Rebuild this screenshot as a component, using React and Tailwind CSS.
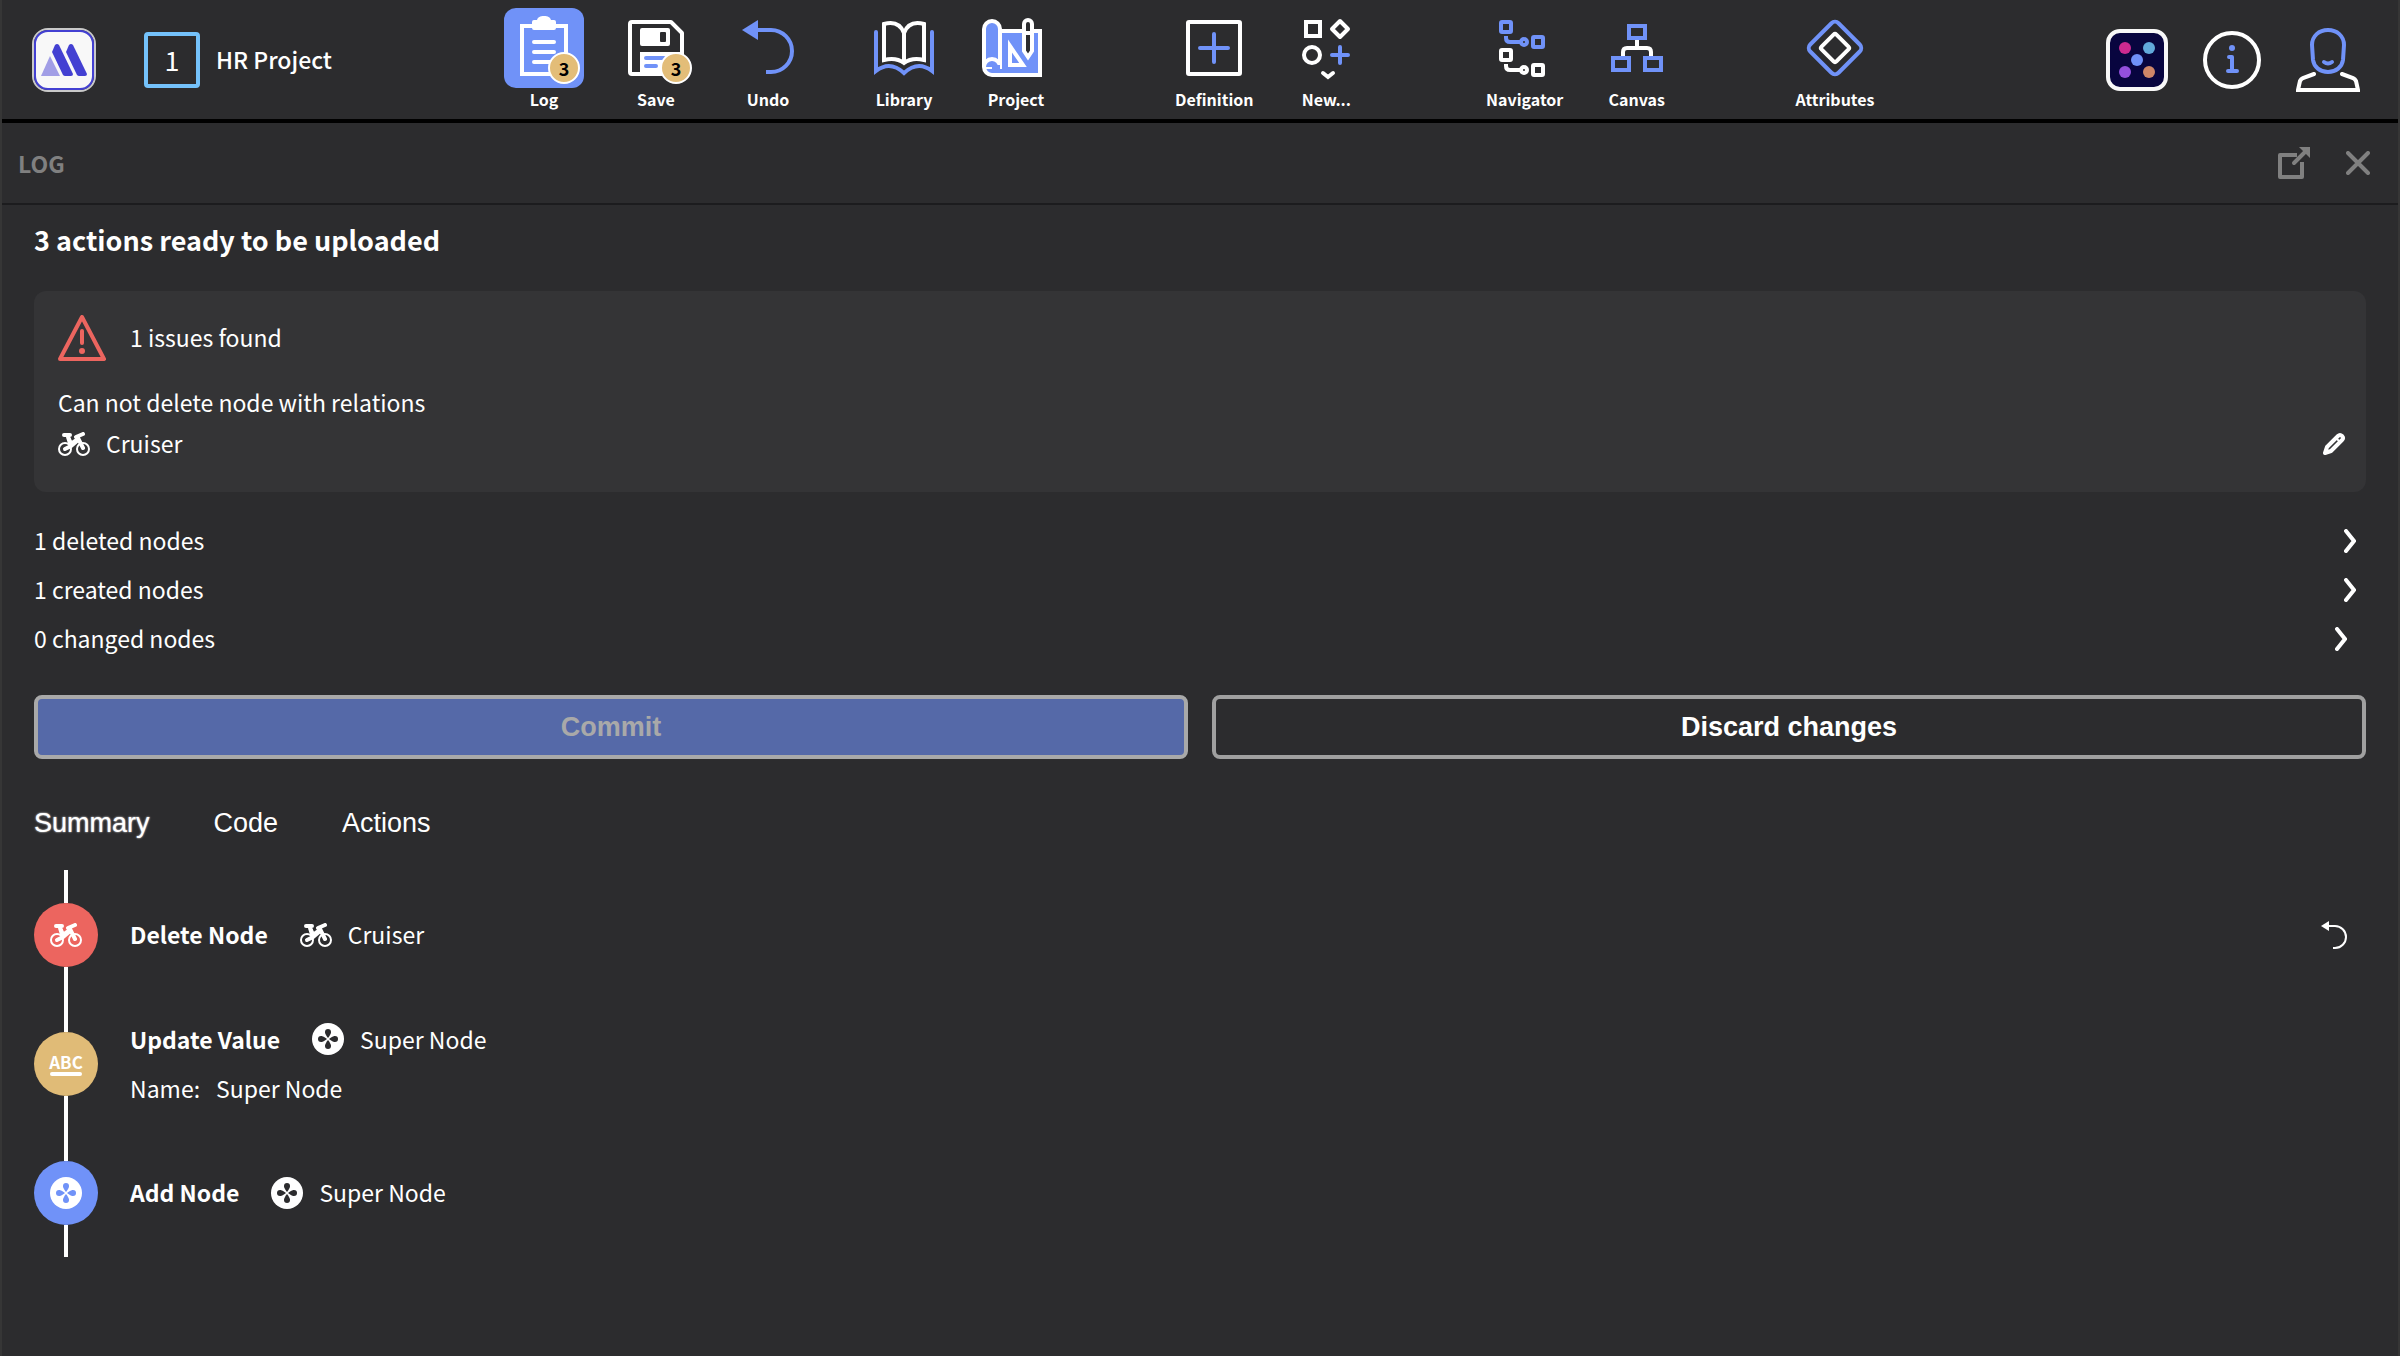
import { useState } from "react";

const LogIcon = () => (
  <svg viewBox="0 0 80 80" className="size-20" fill="none" stroke="#fff" strokeWidth="4">
    <path d="M18 18H62V66H18Z" />
    <path
      d="M30 12h3c1-3 3-4 7-4s6 1 7 4h3a2 2 0 0 1 2 2v6a2 2 0 0 1-2 2H30a2 2 0 0 1-2-2v-6a2 2 0 0 1 2-2Z"
      fill="#fff"
      stroke="none"
    />
    <path d="M30 34H50M30 44H50M30 54H50" strokeLinecap="round" />
  </svg>
);

const SaveIcon = () => (
  <svg viewBox="0 0 80 80" className="size-20" fill="none" stroke="#fff" strokeWidth="4">
    <path d="M16 14H55L66 25V66H16a2 2 0 0 1-2-2V16a2 2 0 0 1 2-2Z" strokeLinejoin="round" />
    <path
      d="M26 20H52a2 2 0 0 1 2 2V36a2 2 0 0 1-2 2H26a2 2 0 0 1-2-2V22a2 2 0 0 1 2-2Z"
      fill="#fff"
      stroke="none"
    />
    <rect x="44" y="24" width="6" height="10" rx="1" fill="#2c2c2e" stroke="none" />
    <path d="M24 44H66V66H24Z" fill="#fff" stroke="none" />
    <path d="M30 50H48M30 58H40" stroke="#7092f8" strokeLinecap="round" />
  </svg>
);

const UndoIcon = () => (
  <svg viewBox="0 0 80 80" className="size-20" fill="none" stroke="#7092f8" strokeWidth="4">
    <path d="M28 22H43A21 21 0 0 1 43 64H38" />
    <path d="M14 22L30 12V32Z" fill="#7092f8" stroke="none" />
  </svg>
);

const LibraryIcon = () => (
  <svg viewBox="0 0 80 80" className="size-20" fill="none" stroke="#fff" strokeWidth="4">
    <path d="M12 24V63Q26 52 40 65Q54 52 68 63V24" stroke="#7092f8" strokeLinecap="round" />
    <path d="M40 25Q35 12 20 16V52Q32 49 40 55Q48 49 60 52V16Q45 12 40 25V55" />
  </svg>
);

const ProjectIcon = () => (
  <svg viewBox="0 0 80 80" className="size-20" fill="#7092f8" stroke="#fff" strokeWidth="4">
    <path d="M24 23H64V67H16A8 8 0 0 1 8 59H24Z" />
    <path d="M8 59V21a8 8 0 0 1 16 0V59" />
    <path d="M8 59A8 8 0 0 1 24 59" />
    <path d="M16 57h8v8h-8z" stroke="none" />
    <path d="M34 38V57H47Z" />
    <path d="M48 16a4 4 0 0 1 8 0V43L52 49L48 43Z" fill="#2c2c2e" />
    <path d="M48 25H56" />
  </svg>
);

const DefinitionIcon = () => (
  <svg viewBox="0 0 80 80" className="size-20" fill="none" stroke="#fff" strokeWidth="4">
    <rect x="14" y="14" width="52" height="52" rx="1" />
    <path d="M40 26V54M26 40H54" stroke="#7092f8" strokeLinecap="round" />
  </svg>
);

const NewIcon = () => (
  <svg viewBox="0 0 80 80" className="size-20" fill="none" stroke="#fff" strokeWidth="4">
    <rect x="20" y="14" width="14" height="14" />
    <path d="M54 13L62 21L54 29L46 21Z" strokeLinejoin="round" />
    <circle cx="26" cy="47" r="8" />
    <path d="M54 39V55M46 47H62" stroke="#7092f8" strokeLinecap="round" />
    <path d="M37 65L42 69L47 65" strokeLinecap="round" />
  </svg>
);

const NavigatorIcon = () => (
  <svg viewBox="0 0 80 80" className="size-20" fill="none" strokeWidth="4">
    <g stroke="#7092f8">
      <rect x="16" y="14" width="10" height="10" rx="1" />
      <path d="M21 28v2q0 4 4 4H35" />
      <circle cx="39" cy="34" r="3" />
      <rect x="48" y="29" width="10" height="10" rx="1" />
    </g>
    <g stroke="#fff">
      <rect x="16" y="42" width="10" height="10" rx="1" />
      <path d="M21 56v2q0 4 4 4H35" />
      <circle cx="39" cy="62" r="3" />
      <rect x="48" y="57" width="10" height="10" rx="1" />
    </g>
  </svg>
);

const CanvasIcon = () => (
  <svg viewBox="0 0 80 80" className="size-20" fill="none" stroke="#7092f8" strokeWidth="4">
    <path d="M40 32V40M26 48V44q0-4 4-4H50q4 0 4 4V48" stroke="#fff" />
    <rect x="32" y="18" width="16" height="12" />
    <rect x="16" y="50" width="16" height="12" />
    <rect x="48" y="50" width="16" height="12" />
  </svg>
);

const AttributesIcon = () => (
  <svg viewBox="0 0 80 80" className="size-20" fill="none" strokeWidth="4">
    <rect x="20" y="20" width="40" height="40" rx="5" transform="rotate(45 40 40)" stroke="#7092f8" />
    <rect x="29.5" y="29.5" width="21" height="21" rx="2" transform="rotate(45 40 40)" stroke="#fff" />
  </svg>
);

const BikeIcon = () => (
  <svg viewBox="0 0 32 24" className="w-8 h-6" fill="none" stroke="#fff" strokeLinecap="round">
    <circle cx="7" cy="17" r="6" strokeWidth="2" />
    <circle cx="25" cy="17" r="6" strokeWidth="2" />
    <path d="M6 3H12M10 5L12 11M7 17L13 14L19 9" strokeWidth="4" />
    <path d="M11 7L13 12L20 7" strokeWidth="4" strokeLinejoin="round" />
    <path d="M18 5L25 2M20 6L25 16" strokeWidth="4" />
  </svg>
);

// Petals take the colour behind the disc
const SuperNodeIcon = ({ petal = "#2c2c2e" }) => (
  <svg viewBox="0 0 32 32" className="size-8" fill={petal}>
    <circle cx="16" cy="16" r="16" fill="#fff" />
    <path d="M16 15C13 11 13 10 13 9a3 3 0 0 1 6 0c0 1 0 2-3 6Z" />
    <path d="M16 17C13 21 13 22 13 23a3 3 0 0 0 6 0c0-1 0-2-3-6Z" />
    <path d="M15 16C11 13 10 13 9 13a3 3 0 0 0 0 6c1 0 2 0 6-3Z" />
    <path d="M17 16C21 13 22 13 23 13a3 3 0 0 1 0 6c-1 0-2 0-6-3Z" />
  </svg>
);

const TextValueIcon = () => (
  <span className="flex flex-col items-center">
    <span className="text-[17px] leading-5 font-bold">ABC</span>
    <span className="h-1 w-8 rounded-full bg-white" />
  </span>
);

const LogoIcon = () => (
  <svg viewBox="0 0 64 64" className="size-16">
    <rect x="1" y="1" width="62" height="62" rx="15" fill="#2c2c2e" stroke="#c9c9c9" strokeWidth="2" />
    <rect x="3" y="3" width="58" height="58" rx="13" fill="#f8f8f8" stroke="#4340d2" strokeWidth="2" />
    <path d="M18 28L28 48H9Z" fill="#a19ee6" />
    <path d="M20 24L23 17Q25 15 27 17L41 46Q41 48 39 48H33Q32 48 31 47Z" fill="#4340d2" />
    <path d="M34 24L37 17Q39 15 41 17L55 46Q55 48 53 48H47Q46 48 45 47Z" fill="#4340d2" />
  </svg>
);

const DiceIcon = () => (
  <svg viewBox="0 0 62 62" className="size-[62px]">
    <rect x="2" y="2" width="58" height="58" rx="12" fill="#08053f" stroke="#f8f8f8" strokeWidth="4" />
    <circle cx="19" cy="19" r="6" fill="#cc2a90" />
    <circle cx="43" cy="19" r="6" fill="#62a9dc" />
    <circle cx="31" cy="31" r="6" fill="#6f91f8" />
    <circle cx="19" cy="43" r="6" fill="#9350dc" />
    <circle cx="43" cy="43" r="6" fill="#cf8668" />
  </svg>
);

const InfoIcon = () => (
  <svg viewBox="0 0 58 58" className="size-[58px]" fill="none" stroke="#7092f8" strokeWidth="4">
    <circle cx="29" cy="29" r="27" stroke="#fff" />
    <circle cx="29" cy="17" r="3" fill="#7092f8" stroke="none" />
    <path d="M26 26H29V40M25 40H34" strokeLinecap="round" strokeLinejoin="round" />
  </svg>
);

const UserIcon = () => (
  <svg viewBox="0 0 64 64" className="size-16" fill="none" stroke="#7092f8" strokeWidth="4" strokeLinecap="round">
    <path d="M16 17C16 8 23 2 32 2S48 8 48 17L47 32C46 39 40 44 32 44S18 39 17 32Z" />
    <path d="M28 34Q32 37 36 34" />
    <path d="M18 46L7 50Q5 51 4 53L2 62H62L60 53Q59 51 57 50L46 46" stroke="#fff" />
  </svg>
);

const OpenIcon = () => (
  <svg viewBox="0 0 32 32" className="size-8" fill="none" stroke="#808080" strokeWidth="4">
    <path d="M19 8H2V30H24V15" strokeLinejoin="round" />
    <path d="M16 16L27 5" strokeLinecap="round" />
    <path d="M21 0H32V11Z" fill="#808080" stroke="none" />
  </svg>
);

const CloseIcon = () => (
  <svg viewBox="0 0 24 24" className="size-6" stroke="#808080" strokeWidth="4" strokeLinecap="round">
    <path d="M2 2L22 22M22 2L2 22" />
  </svg>
);

const WarningIcon = () => (
  <svg viewBox="0 0 48 46" className="w-12 h-[46px]" fill="none" stroke="#ec655f" strokeWidth="4">
    <path d="M24 2L46 44H2Z" strokeLinejoin="round" />
    <path d="M24 16V28" strokeLinecap="round" />
    <circle cx="24" cy="36" r="3" fill="#ec655f" stroke="none" />
  </svg>
);

const PencilIcon = () => (
  <svg viewBox="0 0 24 24" className="size-6" fill="none" stroke="#fff" strokeWidth="4" strokeLinejoin="round">
    <path d="M3 21L5 15L16 4Q18 2 20 4Q22 6 20 8L9 19Z" />
    <path d="M14 6L18 10" strokeWidth="2" />
  </svg>
);

const ChevronIcon = () => (
  <svg viewBox="0 0 12 24" className="w-3 h-6" fill="none" stroke="#fff" strokeWidth="4">
    <path d="M2 2L10 12L2 22" strokeLinecap="round" />
  </svg>
);

const RevertIcon = () => (
  <svg viewBox="0 0 26 28" className="w-[26px] h-7" fill="none" stroke="#fff" strokeWidth="2">
    <path d="M7 5H14A11 11 0 0 1 14 27H12" />
    <path d="M0 5L8 0V10Z" fill="#fff" stroke="none" />
  </svg>
);

const toolGroups = [
  [
    [
      { label: "Log", icon: LogIcon, badge: 3, active: true },
      { label: "Save", icon: SaveIcon, badge: 3 },
      { label: "Undo", icon: UndoIcon },
    ],
    [
      { label: "Library", icon: LibraryIcon },
      { label: "Project", icon: ProjectIcon },
    ],
  ],
  [
    [
      { label: "Definition", icon: DefinitionIcon },
      { label: "New...", icon: NewIcon },
    ],
  ],
  [
    [
      { label: "Navigator", icon: NavigatorIcon },
      { label: "Canvas", icon: CanvasIcon },
    ],
  ],
  [[{ label: "Attributes", icon: AttributesIcon }]],
];

const nodeCounts = [
  { label: "1 deleted nodes", pad: "pr-[10px]" },
  { label: "1 created nodes", pad: "pr-[10px]" },
  { label: "0 changed nodes", pad: "pr-[19px]" },
];

const tabs = ["Summary", "Code", "Actions"];

const ToolButton = ({ label, icon: Icon, badge, active }) => (
  <button className="flex w-28 flex-col items-center">
    <span className={`relative size-20 rounded-xl ${active ? "bg-[#7092f8]" : ""}`}>
      <Icon />
      {badge && (
        <span className="absolute bottom-1 right-1 flex size-8 items-center justify-center rounded-full border-2 border-white bg-[#e3bd78] text-lg leading-none font-bold text-black">
          {badge}
        </span>
      )}
    </span>
    <span className="text-base leading-[22px] font-bold">{label}</span>
  </button>
);

const TimelineRow = ({ color, icon, title, target, targetIcon, detail, onRevert }) => (
  <li className="flex min-h-[129px] gap-8">
    <div className="flex w-16 shrink-0 flex-col items-center">
      <span className="w-1 flex-1 bg-white" />
      <span className={`flex size-16 items-center justify-center rounded-full ${color}`}>{icon}</span>
      <span className="w-1 flex-1 bg-white" />
    </div>
    <div className="flex flex-1 flex-col justify-center">
      <div className="flex items-center gap-8">
        <strong className="font-bold">{title}</strong>
        <span className="flex items-center gap-4">
          {targetIcon}
          {target}
        </span>
      </div>
      {detail && (
        <div className="flex gap-4">
          <span>{detail.name}:</span>
          <span>{detail.value}</span>
        </div>
      )}
    </div>
    {onRevert && (
      <button aria-label="Revert action" onClick={onRevert} className="pr-[19px]">
        <RevertIcon />
      </button>
    )}
  </li>
);

const App = () => {
  const [activeTab, setActiveTab] = useState("Summary");

  return (
    <div className="flex min-h-screen flex-col border-x-2 border-[#363636] bg-[#2c2c2e] font-['Noto_Sans_CJK_SC','Open_Sans',sans-serif] text-[23px] leading-[49px] text-white">
      {/* Toolbar */}
      <header className="flex border-b-4 border-black">
        <div className="flex w-[486px] shrink-0 items-center pl-[30px]">
          <a href="#home" aria-label="Home">
            <LogoIcon />
          </a>
          <span className="ml-12 flex size-14 items-center justify-center rounded border-4 border-[#74c2fb] text-[27px]">
            1
          </span>
          <h1 className="ml-4 font-medium">HR Project</h1>
        </div>
        <nav className="flex flex-1 justify-between pt-2 pb-[9px]">
          {toolGroups.map((group, i) => (
            <div key={i} className="flex gap-6">
              {group.map((tools, j) => (
                <div key={j} className="flex">
                  {tools.map((tool) => (
                    <ToolButton key={tool.label} {...tool} />
                  ))}
                </div>
              ))}
            </div>
          ))}
        </nav>
        <div className="flex w-[507px] shrink-0 items-center justify-end gap-[35px] pr-[38px]">
          <button aria-label="Apps">
            <DiceIcon />
          </button>
          <button aria-label="Info">
            <InfoIcon />
          </button>
          <button aria-label="Account">
            <UserIcon />
          </button>
        </div>
      </header>

      {/* Panel title */}
      <div className="flex h-[82px] items-center justify-between border-b-2 border-[#1c1c1e] pr-7 pl-4">
        <h2 className="font-bold text-[#808080]">LOG</h2>
        <div className="flex items-center gap-9">
          <button aria-label="Open in window">
            <OpenIcon />
          </button>
          <button aria-label="Close">
            <CloseIcon />
          </button>
        </div>
      </div>

      <main className="px-8 pt-[10px]">
        <h3 className="text-[27px] font-bold">3 actions ready to be uploaded</h3>

        {/* Issues */}
        <section className="mt-[27px] rounded-xl bg-[#343436] pt-[22px] pr-5 pb-7 pl-6">
          <div className="flex items-center gap-6">
            <WarningIcon />
            <span>1 issues found</span>
          </div>
          <p className="mt-5 leading-[41px]">Can not delete node with relations</p>
          <div className="flex items-center gap-4 leading-[41px]">
            <BikeIcon />
            <span className="flex-1">Cruiser</span>
            <button aria-label="Edit Cruiser">
              <PencilIcon />
            </button>
          </div>
        </section>

        {/* Node counts */}
        <ul className="mt-6">
          {nodeCounts.map((item) => (
            <li key={item.label}>
              <button className={`flex w-full items-center justify-between ${item.pad}`}>
                {item.label}
                <ChevronIcon />
              </button>
            </li>
          ))}
        </ul>

        <div className="mt-8 grid grid-cols-2 gap-6 font-['Liberation_Sans',Arial,sans-serif] text-[27px] font-bold">
          <button disabled className="h-16 rounded-lg border-4 border-[#a9a9a9] bg-[#5569a8] text-[#a9a9a9]">
            Commit
          </button>
          <button className="h-16 rounded-lg border-4 border-[#a0a0a0]">Discard changes</button>
        </div>

        <div role="tablist" className="mt-10 flex gap-16 font-['Liberation_Sans',Arial,sans-serif] text-[27px]">
          {tabs.map((tab) => (
            <button
              key={tab}
              role="tab"
              aria-selected={activeTab === tab}
              onClick={() => setActiveTab(tab)}
              className={activeTab === tab ? "[text-shadow:0_0_2px_#fff]" : ""}
            >
              {tab}
            </button>
          ))}
        </div>

        {/* Timeline */}
        <ol className="mt-[22px]">
          <TimelineRow
            color="bg-[#ec655f]"
            icon={<BikeIcon />}
            title="Delete Node"
            target="Cruiser"
            targetIcon={<BikeIcon />}
            onRevert={() => {}}
          />
          <TimelineRow
            color="bg-[#e0bb77]"
            icon={<TextValueIcon />}
            title="Update Value"
            target="Super Node"
            targetIcon={<SuperNodeIcon />}
            detail={{ name: "Name", value: "Super Node" }}
          />
          <TimelineRow
            color="bg-[#7092f8]"
            icon={<SuperNodeIcon petal="#7092f8" />}
            title="Add Node"
            target="Super Node"
            targetIcon={<SuperNodeIcon />}
          />
        </ol>
      </main>
    </div>
  );
};

export default App;
